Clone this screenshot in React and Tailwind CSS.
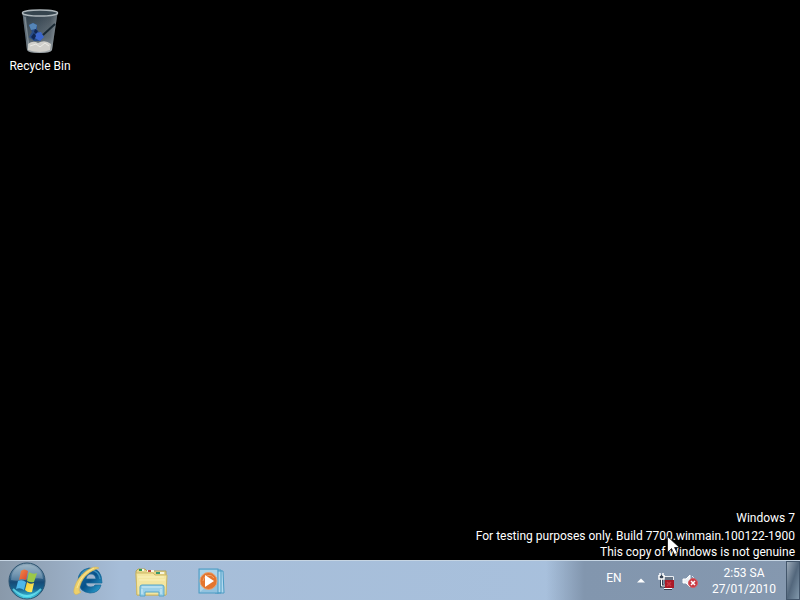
import React from "react";

function RecycleBin() {
  return (
    <svg width="40" height="48" viewBox="0 0 40 48" aria-hidden="true">
      <defs>
        <linearGradient id="glass" x1="0" x2="1">
          <stop offset="0" stopColor="#8b979f" />
          <stop offset=".14" stopColor="#35444f" />
          <stop offset=".5" stopColor="#42505b" />
          <stop offset=".8" stopColor="#566169" />
          <stop offset="1" stopColor="#929a9f" />
        </linearGradient>
        <linearGradient id="binShade" x1="0" y1="0" x2="0" y2="1">
          <stop offset="0" stopColor="#1c2c39" stopOpacity=".4" />
          <stop offset=".6" stopColor="#8997a2" stopOpacity=".25" />
          <stop offset="1" stopColor="#e8e8e6" stopOpacity=".6" />
        </linearGradient>
      </defs>
      <path d="M2.500 5 7 42Q8 45 19.500 45Q31 45 32 42L37.500 5Z" fill="url(#glass)" />
      <path d="M2.500 5 7 42Q8 45 19.500 45Q31 45 32 42L37.500 5Z" fill="url(#binShade)" />
      <path d="M9 17 13 15 17 17 17 22 20 25 23 29 20 33 14 33 9 29 12 24Z" fill="#284c88" />
      <path d="M9 17 13 15 17 17 16 21 11 22Z" fill="#5585b7" />
      <path d="m16 25 5-1 3 5-4 4-5-3Z" fill="#3b66cc" />
      <path d="m11 29 3-4 2 3-2 4Z M15 21l3 2-2 3-2-2Z" fill="#102550" />
      <path d="m23 27 12-11" stroke="#192832" strokeWidth="2" />
      <path d="M8 36Q13 32 18 35Q25 31 31 36L30 42Q20 46 8 42Z" fill="#d0cfca" />
      <path d="m10 38 6-2 4 3 5-4 4 3" stroke="#ebebe6" fill="none" />
      <ellipse cx="20" cy="5" rx="17.500" ry="3" fill="#35444e" stroke="#aeb7bc" strokeWidth="1.500" />
      <path d="M5 9 9 40" stroke="#bec7cc" strokeOpacity=".4" strokeWidth="1.500" />
    </svg>
  );
}

function StartOrb() {
  return (
    <svg width="38" height="38" viewBox="0 0 38 38" aria-hidden="true">
      <defs>
        <linearGradient id="orb" x1="0" y1="0" x2="0" y2="1">
          <stop offset="0" stopColor="#91aabb" />
          <stop offset=".3" stopColor="#547d9d" />
          <stop offset=".53" stopColor="#164a76" />
          <stop offset=".72" stopColor="#16638f" />
          <stop offset="1" stopColor="#48d8ed" />
        </linearGradient>
        <linearGradient id="redFlag" x1="0" y1="0" x2="1" y2="1">
          <stop stopColor="#ed8e49" /><stop offset="1" stopColor="#dc412d" />
        </linearGradient>
        <linearGradient id="yellowFlag" x1="0" y1="0" x2="1" y2="1">
          <stop stopColor="#f2c62c" /><stop offset="1" stopColor="#fff068" />
        </linearGradient>
      </defs>
      <circle cx="19" cy="19" r="18" fill="url(#orb)" stroke="#2a526f" />
      <path d="M3 18C4 7 10 3 19 3s15 5 16 14C25 14 14 21 3 18Z" fill="#d2e4ec" fillOpacity=".28" />
      <path d="M13 9q3-3 7 0l-2 9q-4-2-7 0Z" fill="url(#redFlag)" />
      <path d="M21 10q4 3 8 1l-3 9q-3 1-7-1Z" fill="#9bc848" />
      <path d="M10 19q4-2 8 1l-2 8q-4-3-8-1Z" fill="#4eb7e9" />
      <path d="M19 20q3 3 7 1l-2 9q-4 1-7-2Z" fill="url(#yellowFlag)" />
      <path d="M5 27Q19 41 33 27" stroke="#78f6ff" strokeOpacity=".65" strokeWidth="2" fill="none" />
    </svg>
  );
}

function Explorer() {
  return (
    <svg width="32" height="32" viewBox="0 0 32 32" aria-hidden="true">
      <defs>
        <linearGradient id="ie" x1="0" y1="0" x2="1" y2="1">
          <stop stopColor="#2377ae" /><stop offset=".5" stopColor="#075089" /><stop offset="1" stopColor="#30aedb" />
        </linearGradient>
      </defs>
      <path fillRule="evenodd" d="M30 18H14Q14 22 19 22Q22 22 23 20H29Q27 28 18 28Q7 27 6 16Q6 5 17 3Q30 3 30 18ZM14 14H24Q23 9 19 9Q15 9 14 14Z" fill="url(#ie)" stroke="#156797" strokeWidth=".700" />
      <path d="M9 10Q12 4 19 5Q27 6 28 14" fill="none" stroke="#398fbd" strokeWidth="1.500" />
      <path d="M27 3C22-1 7 8 3 21C0 29 3 32 9 27Q6 27 8 21C11 11 18 6 27 3Z" fill="#eed06b" stroke="#d3b559" strokeWidth=".600" />
      <path d="M22 3Q9 9 5 23" fill="none" stroke="#fae898" />
    </svg>
  );
}

function Folder() {
  return (
    <svg width="34" height="30" viewBox="0 0 34 30" aria-hidden="true">
      <path d="M1 3 3 1H10L12 3H31V27H2Z" fill="#e5d68b" stroke="#b5a55e" />
      <path d="M4 2h5M12 3h7M22 5h7" stroke="#f8f6df" strokeWidth="2" />
      <path d="M4 2h3" stroke="#31994e" strokeWidth="2" />
      <path d="M13 3h3" stroke="#c04c44" strokeWidth="2" />
      <path d="M21 5h3" stroke="#38996e" strokeWidth="2" />
      <path d="M1 5H18L20 7H32L31 27H2Z" fill="#f3e6a1" stroke="#cfb966" />
      <path d="M21 5h4" stroke="#38996e" strokeWidth="2" />
      <path d="M3 9H29M4 12h26" stroke="#faf2bc" />
      <path d="M5 27V19Q5 17 7 17H27Q29 17 29 19V28H24V24H10V28H5Z" fill="#9bd0e8" stroke="#55a5c8" />
      <path d="M7 19H27M7 21v5M26 21v5" stroke="#d1edf6" />
    </svg>
  );
}

function MediaPlayer() {
  return (
    <svg width="28" height="27" viewBox="0 0 28 27" aria-hidden="true">
      <path d="M20 3h5l1 22h-7M17 2h6v23h-6" fill="#b2d9ef" stroke="#4a9bc3" />
      <rect x="1" y="1" width="19" height="24" fill="#91c2df" stroke="#4a9bc3" />
      <path d="M2 2h17v8L2 24Z" fill="#b9dced" fillOpacity=".7" />
      <circle cx="10.500" cy="13" r="8.500" fill="#e4752e" stroke="#e6a373" />
      <path d="M5 13a6 6 0 0 1 11-3" fill="none" stroke="#eea36b" />
      <path d="M7 7 16 13 7 19Z" fill="#fff" />
    </svg>
  );
}

function NetworkIcon() {
  return (
    <svg width="17" height="17" viewBox="0 0 17 17" aria-hidden="true">
      <path d="M6 3.500h9.500v8H6" fill="#677485" stroke="#e9edf2" />
      <path d="M3.500 6v7H10M6 15.500h8" fill="none" stroke="#344152" strokeWidth="3" />
      <path d="M3.500 6v7H10M6 15.500h8" fill="none" stroke="#fff" />
      <path d="M1 2v4h5V2M2 0v3M5 0v3" fill="#364353" stroke="#fff" strokeWidth="1.500" />
      <rect x="7" y="7" width="9" height="8" fill="#aa1a27" />
      <path d="m9 9 4 4m0-4-4 4" stroke="#c83945" strokeWidth="1.500" />
    </svg>
  );
}

function VolumeIcon() {
  return (
    <svg width="16" height="16" viewBox="0 0 16 16" aria-hidden="true">
      <path d="M1 6h3l4-4v12l-4-4H1Z" fill="#edf1f5" stroke="#fff" />
      <path d="M10 3q2 1 2 4" fill="none" stroke="#dfe8ef" />
      <circle cx="11" cy="10" r="4.500" fill="#c83942" stroke="#d55b62" />
      <path d="m9 8 4 4m0-4-4 4" stroke="#fff" strokeWidth="1.500" />
    </svg>
  );
}

export default function App() {
  return (
    <div className="relative flex min-h-screen flex-col overflow-hidden bg-black font-['Roboto',sans-serif] text-xs text-white">
      <main className="flex flex-1 flex-col items-start justify-between">
        <button className="flex w-20 flex-col items-center pt-2">
          <RecycleBin />
          <span className="leading-5">Recycle Bin</span>
        </button>
        <div className="self-end pr-[5px] text-right leading-4">
          <p className="mb-0.5">Windows 7</p>
          <p>For testing purposes only. Build 7700.winmain.100122-1900</p>
          <p>This copy of Windows is not genuine</p>
        </div>
      </main>

      <footer className="flex h-10 items-stretch border-t border-[#c6d5e3] bg-linear-to-r from-[#8999aa] from-0% via-[#a6bdd8] via-15% to-[#a9c2df] to-100%">
        <button aria-label="Start" className="flex w-14 items-center pl-2"><StartOrb /></button>
        <nav aria-label="Pinned programs" className="flex">
          <button aria-label="Internet Explorer" className="flex w-16 items-center justify-center"><Explorer /></button>
          <button aria-label="Windows Explorer" className="flex w-16 items-center justify-center pt-1"><Folder /></button>
          <button aria-label="Media Player" className="flex w-14 items-center justify-center pt-0.5"><MediaPlayer /></button>
        </nav>
        <div className="ml-auto flex bg-linear-to-r from-transparent from-0% via-[#8296ae] via-15% to-[#8598af]">
          <button className="ml-12 w-10 pb-1.5">EN</button>
          <button aria-label="Show hidden icons" className="flex w-4 items-center justify-center pr-0.5">
            <svg width="8" height="5" viewBox="0 0 8 5" aria-hidden="true"><path d="M0 4.500 4 .500l4 4Z" fill="#fff" /></svg>
          </button>
          <button aria-label="Network disconnected" className="flex w-8 items-center justify-center pt-0.5"><NetworkIcon /></button>
          <button aria-label="Volume muted" className="flex w-5 items-center justify-start"><VolumeIcon /></button>
          <button className="w-21 leading-4"><time>2:53 SA<br />27/01/2010</time></button>
          <button aria-label="Show desktop" className="w-3.5 border border-[#43566b] bg-linear-to-br from-[#9dabb9] via-[#53677c] to-[#8299ac]" />
        </div>
      </footer>

      <svg className="pointer-events-none absolute top-[536px] left-[667px]" width="13" height="20" viewBox="0 0 13 20" aria-hidden="true">
        <path d="M.500.500v16l4-4 3 6 3-1-3-6h5Z" fill="#fff" stroke="#000" strokeWidth=".700" />
      </svg>
    </div>
  );
}
